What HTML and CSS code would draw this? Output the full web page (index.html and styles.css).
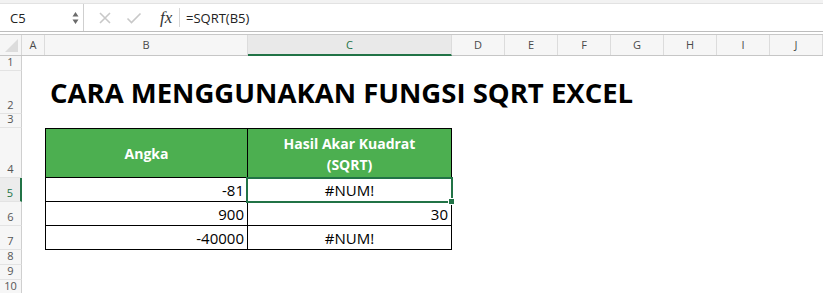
FILE: index.html
```html
<!DOCTYPE html>
<html lang="id">
<head>
  <meta charset="UTF-8">
  <title>Fungsi SQRT Excel</title>
  <link rel="stylesheet" href="styles.css">
</head>
<body>
  <div class="formula-bar">
    <div class="name-box">
      <span>C5</span>
      <span class="spin">
        <svg width="7" height="14" viewBox="0 0 7 14"><path d="M3.5 1 L6.5 5.5 L0.5 5.5 Z M3.5 13 L6.5 8.5 L0.5 8.5 Z" fill="#6b6b6b"/></svg>
      </span>
    </div>
    <div class="fx-tools">
      <svg class="tool" width="14" height="14" viewBox="0 0 14 14"><path d="M2 2 L12 12 M12 2 L2 12" stroke="#c8c8c8" stroke-width="1.6"/></svg>
      <svg class="tool" width="16" height="14" viewBox="0 0 16 14"><path d="M1.5 7.5 L5.5 11.5 L14.5 2.5" stroke="#c8c8c8" stroke-width="1.6" fill="none"/></svg>
      <span class="fx">fx</span>
    </div>
    <div class="formula">=SQRT(B5)</div>
  </div>

  <div class="col-headers">
    <div class="corner"></div>
    <div class="col-head w-a">A</div>
    <div class="col-head w-b">B</div>
    <div class="col-head w-c active">C</div>
    <div class="col-head w-n">D</div>
    <div class="col-head w-n">E</div>
    <div class="col-head w-n">F</div>
    <div class="col-head w-n">G</div>
    <div class="col-head w-n">H</div>
    <div class="col-head w-n">I</div>
    <div class="col-head w-n">J</div>
  </div>

  <div class="sheet">
    <div class="row-head r1">1</div>
    <div class="row-head r2">2</div>
    <div class="row-head r3">3</div>
    <div class="row-head r4">4</div>
    <div class="row-head r5 active">5</div>
    <div class="row-head r6">6</div>
    <div class="row-head r7">7</div>
    <div class="row-head r8">8</div>
    <div class="row-head r9">9</div>
    <div class="row-head r10">10</div>

    <h1 class="title">CARA MENGGUNAKAN FUNGSI SQRT EXCEL</h1>

    <div class="cell head first r4 cb">Angka</div>
    <div class="cell head r4 cc">Hasil Akar Kuadrat<br>(SQRT)</div>

    <div class="cell num first r5 cb">-81</div>
    <div class="cell mid r5 cc selected">#NUM!</div>

    <div class="cell num first r6 cb">900</div>
    <div class="cell num r6 cc">30</div>

    <div class="cell num first r7 cb">-40000</div>
    <div class="cell mid r7 cc">#NUM!</div>
  </div>
</body>
</html>
```

FILE: styles.css
```css
body {
  margin: 0;
  width: 823px;
  height: 293px;
  overflow: hidden;
  background: #ffffff;
  font-family: 'Open Sans', 'Noto Sans', sans-serif;
}

/* formula bar */
.formula-bar {
  display: flex;
  align-items: stretch;
  height: 27px;
  margin-top: 3px;
  border-top: 1px solid #e2e2e2;
  border-bottom: 1px solid #bdbdbd;
  background: #fff;
  box-shadow: 0 -3px 0 #f2f2f2;
}

.name-box {
  width: 84px;
  display: flex;
  align-items: center;
  justify-content: space-between;
  padding: 0 4px 0 10px;
  box-sizing: border-box;
  border-right: 1px solid #cfcfcf;
  font-size: 13px;
  color: #222;
}

.spin {
  display: flex;
  align-items: center;
}

.fx-tools {
  width: 96px;
  display: flex;
  align-items: center;
  gap: 14px;
  padding-left: 14px;
  box-sizing: border-box;
  border-right: 1px solid #d6d6d6;
  margin: 4px 0;
}

.fx {
  font-family: 'Liberation Serif', serif;
  font-style: italic;
  font-size: 17px;
  color: #333;
  margin-left: 4px;
}

.formula {
  display: flex;
  align-items: center;
  padding-left: 6px;
  font-size: 13px;
  color: #222;
}

/* column headers */
.col-headers {
  display: flex;
  height: 20px;
  margin-top: 2px;
  border-top: 1px solid #c8c8c8;
  border-bottom: 1px solid #c6c6c6;
  background: #f6f6f6;
}

.corner {
  width: 22px;
  border-right: 1px solid #d8d8d8;
  box-sizing: border-box;
  position: relative;
}

.corner::after {
  content: "";
  position: absolute;
  right: 3px;
  bottom: 3px;
  border-left: 13px solid transparent;
  border-bottom: 13px solid #dcdcdc;
}

.col-head {
  box-sizing: border-box;
  border-right: 1px solid #dcdcdc;
  font-size: 11px;
  color: #4a4a4a;
  text-align: center;
  line-height: 20px;
}

.w-a { width: 23px; }
.w-b { width: 203px; }
.w-c { width: 204px; }
.w-n { width: 53px; }

.col-head.active {
  background: #e9e9e9;
  color: #217346;
  border-bottom: 2px solid #217346;
  line-height: 19px;
  height: 21px;
  margin-bottom: -1px;
}

/* sheet grid */
.sheet {
  display: grid;
  grid-template-columns: 22px 23px 203px 204px repeat(7, 53px);
  grid-template-rows: 15px 43px 14px 50px 24px 24px 24px 15px 15px 15px;
}

.row-head {
  grid-column: 1;
  box-sizing: border-box;
  background: #f6f6f6;
  border-right: 1px solid #cfcfcf;
  border-bottom: 1px solid #e3e3e3;
  font-size: 11px;
  color: #555;
  display: flex;
  align-items: flex-end;
  justify-content: center;
  padding-bottom: 1px;
}

.row-head.active {
  color: #217346;
  background: #ececec;
  border-right: 2px solid #217346;
}

.r1 { grid-row: 1; }
.r2 { grid-row: 2; }
.r3 { grid-row: 3; }
.r4 { grid-row: 4; }
.r5 { grid-row: 5; }
.r6 { grid-row: 6; }
.r7 { grid-row: 7; }
.r8 { grid-row: 8; }
.r9 { grid-row: 9; }
.r10 { grid-row: 10; }

.title {
  grid-row: 2;
  grid-column: 3 / -1;
  margin: 0 0 3px;
  padding-left: 5px;
  align-self: end;
  font-family: 'Open Sans', sans-serif;
  font-weight: 700;
  font-size: 27.5px;
  line-height: 36px;
  color: #000;
  white-space: nowrap;
}

.cb { grid-column: 3; }
.cc { grid-column: 4; }

.cell {
  box-sizing: border-box;
  border-right: 1px solid #000;
  border-bottom: 1px solid #000;
  font-family: 'Open Sans', sans-serif;
  font-size: 15px;
  color: #000;
  display: flex;
  align-items: center;
  padding: 1px 3px 0;
}

.cell.first { border-left: 1px solid #000; }

.cell.head {
  border-top: 1px solid #000;
  background: #4caf50;
  color: #fff;
  font-weight: 700;
  font-size: 14px;
  line-height: 21px;
  justify-content: center;
  text-align: center;
}

.cell.num { justify-content: flex-end; }
.cell.mid { justify-content: center; }

.cell.selected { position: relative; }

.cell.selected::after {
  content: "";
  position: absolute;
  left: -2px;
  top: -1px;
  right: -2px;
  bottom: -2px;
  border: 2px solid #217346;
}

.cell.selected::before {
  content: "";
  position: absolute;
  right: -4px;
  bottom: -4px;
  width: 5px;
  height: 5px;
  background: #217346;
  border: 1px solid #fff;
  z-index: 1;
}
```
